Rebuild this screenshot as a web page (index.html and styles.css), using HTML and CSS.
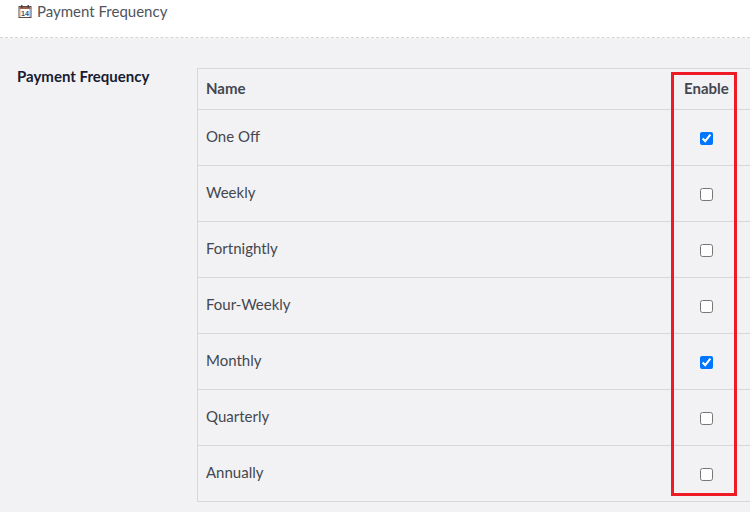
FILE: index.html
```html
<!DOCTYPE html>
<html lang="en">
<head>
  <meta charset="UTF-8">
  <title>Payment Frequency</title>
  <link rel="stylesheet" href="styles.css">
</head>
<body>
  <div class="page-header">
    <svg class="cal-icon" width="14" height="13" viewBox="0 0 14 13">
      <rect x="1" y="1.5" width="12" height="11" fill="#fff" stroke="#5a4a48"/>
      <rect x="1.5" y="2" width="11" height="2" fill="#a0604a"/>
      <rect x="1.5" y="4" width="1" height="8" fill="#e8a070"/>
      <rect x="11.5" y="4" width="1" height="8" fill="#8aa8d8"/>
      <rect x="3" y="0" width="1.5" height="3" fill="#4a4a4a"/>
      <rect x="9.5" y="0" width="1.5" height="3" fill="#4a4a4a"/>
      <text x="7" y="11" font-family="Liberation Sans" font-size="7" font-weight="bold" text-anchor="middle" fill="#35506e">14</text>
    </svg>
    <span>Payment Frequency</span>
  </div>

  <div class="content">
    <div class="field-label">Payment Frequency</div>
    <table class="freq-table">
      <thead>
        <tr><th>Name</th><th class="enable">Enable</th></tr>
      </thead>
      <tbody>
        <tr><td>One Off</td><td class="enable"><input type="checkbox" checked></td></tr>
        <tr><td>Weekly</td><td class="enable"><input type="checkbox"></td></tr>
        <tr><td>Fortnightly</td><td class="enable"><input type="checkbox"></td></tr>
        <tr><td>Four-Weekly</td><td class="enable"><input type="checkbox"></td></tr>
        <tr><td>Monthly</td><td class="enable"><input type="checkbox" checked></td></tr>
        <tr><td>Quarterly</td><td class="enable"><input type="checkbox"></td></tr>
        <tr><td>Annually</td><td class="enable"><input type="checkbox"></td></tr>
      </tbody>
    </table>
  </div>

  <div class="highlight"></div>
</body>
</html>
```

FILE: styles.css
```css
html, body {
  height: 100%;
}

body {
  margin: 0;
  background-color: #f2f2f5;
  font-family: Lato, 'Open Sans', sans-serif;
  color: #44474f;
  overflow: hidden;
  position: relative;
}

.page-header {
  height: 38px;
  box-sizing: border-box;
  padding: 1px 0 0 18px;
  background-color: #fff;
  border-bottom: 1px dashed #d5d5d8;
  display: flex;
  align-items: flex-start;
  gap: 5px;
  font-size: 15px;
  line-height: 20px;
  color: #50535c;
}

.cal-icon {
  margin-top: 4px;
}

.content {
  display: flex;
  align-items: flex-start;
  padding: 29px 0 0 17px;
}

.field-label {
  width: 180px;
  flex-shrink: 0;
  font-size: 15px;
  font-weight: bold;
  line-height: 18px;
  color: #181c32;
}

.freq-table {
  flex-shrink: 0;
  width: 560px;
  margin-top: 1px;
  border-collapse: collapse;
  border-left: 1px solid #d8d8db;
  font-size: 15px;
}

.freq-table th,
.freq-table td {
  border-top: 1px solid #d8d8db;
  border-bottom: 1px solid #d8d8db;
  padding: 0 8px;
  text-align: left;
}

.freq-table th {
  height: 41px;
  padding-bottom: 3px;
  box-sizing: border-box;
  font-weight: bold;
}

.freq-table td {
  height: 56px;
  padding-bottom: 3px;
  box-sizing: border-box;
}

.freq-table .enable {
  width: 105px;
  padding: 0;
}

.freq-table th.enable {
  padding: 0 0 3px 32px;
  box-sizing: border-box;
}

.freq-table td.enable input {
  display: block;
  width: 13px;
  height: 13px;
  margin: 2px 0 0 48px;
}

.highlight {
  position: absolute;
  left: 671px;
  top: 72px;
  width: 66px;
  height: 424px;
  box-sizing: border-box;
  border: 3px solid #ed1c24;
}
```
